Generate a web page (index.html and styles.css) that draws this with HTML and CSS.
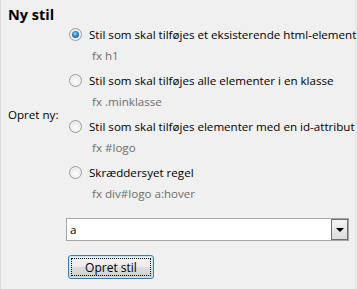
FILE: index.html
```html
<!DOCTYPE html>
<html lang="da">
<head>
<meta charset="utf-8">
<link rel="stylesheet" href="styles.css">
</head>
<body>
<div class="panel">
  <h1 class="title">Ny stil</h1>
  <div class="create">
    <div class="create-label">Opret ny:</div>
    <div class="options">
      <label class="option">
        <span class="radio checked"></span>
        <span class="option-text">Stil som skal tilføjes et eksisterende html-element</span>
      </label>
      <div class="hint">fx h1</div>
      <label class="option">
        <span class="radio"></span>
        <span class="option-text">Stil som skal tilføjes alle elementer i en klasse</span>
      </label>
      <div class="hint">fx .minklasse</div>
      <label class="option">
        <span class="radio"></span>
        <span class="option-text">Stil som skal tilføjes elementer med en id-attribut</span>
      </label>
      <div class="hint">fx #logo</div>
      <label class="option">
        <span class="radio"></span>
        <span class="option-text">Skræddersyet regel</span>
      </label>
      <div class="hint">fx div#logo a:hover</div>
    </div>
  </div>
  <div class="combo">
    <span class="combo-value">a</span>
    <span class="combo-btn"><span class="arrow"></span></span>
  </div>
  <div class="actions">
    <button class="btn"><span class="btn-focus">Opret stil</span></button>
  </div>
</div>
</body>
</html>
```
FILE: styles.css
```css
html, body {
  margin: 0;
  padding: 0;
  background: #f0f0f0;
}
body {
  font-family: "Open Sans", "Noto Sans", sans-serif;
  font-size: 11.6px;
  color: #000;
}
.panel {
  width: 356px;
  height: 289px;
  box-sizing: border-box;
  border-left: 1px solid #dcdcdc;
  border-right: 1px solid #e4e4e4;
  padding: 5px 0 0 7px;
}
.title {
  margin: 0;
  font-size: 14.5px;
  font-weight: bold;
  line-height: 19px;
}
.create {
  display: flex;
  align-items: center;
}
.create-label {
  width: 60px;
  flex: none;
}
.options {
  display: flex;
  flex-direction: column;
  min-width: 0;
}
.option {
  display: flex;
  align-items: center;
  height: 20px;
  margin-top: 4px;
  white-space: nowrap;
}
.option:first-child {
  margin-top: 0;
}
.radio {
  width: 11px;
  height: 11px;
  border-radius: 50%;
  border: 1px solid #9a9a9a;
  background: radial-gradient(circle at 50% 60%, #ffffff 0%, #e6e6e6 70%, #d0d0d0 100%);
  box-shadow: inset 0 0 0 1px #f4f4f4;
  margin-left: 1px;
  margin-right: 7px;
  flex: none;
  position: relative;
}
.radio.checked::after {
  content: "";
  position: absolute;
  left: 2px;
  top: 2px;
  width: 7px;
  height: 7px;
  border-radius: 50%;
  background: radial-gradient(circle at 45% 40%, #9fe0ff 0%, #2b8bd6 40%, #0b4a8a 100%);
}
.hint {
  color: #6e6e6e;
  height: 20px;
  line-height: 20px;
  margin-left: 24px;
  margin-top: 2px;
  white-space: nowrap;
}
.combo {
  display: flex;
  align-items: center;
  margin-left: 58px;
  margin-top: 14px;
  width: 283px;
  height: 23px;
  box-sizing: border-box;
  border: 1px solid #a6a6a6;
  background: #fff;
}
.combo-value {
  flex: 1;
  padding-left: 3px;
}
.combo-btn {
  width: 17px;
  height: 21px;
  box-sizing: border-box;
  border: 1px solid #707070;
  background: linear-gradient(#f4f4f4, #dcdcdc);
  display: flex;
  align-items: center;
  justify-content: center;
}
.arrow {
  width: 0;
  height: 0;
  border-left: 4px solid transparent;
  border-right: 4px solid transparent;
  border-top: 4px solid #000;
}
.actions {
  margin-left: 60px;
  margin-top: 14px;
}
.btn {
  width: 86px;
  height: 24px;
  padding: 2px;
  border: 1px solid #3c7fb1;
  border-radius: 3px;
  background: linear-gradient(#f4f4f4 0%, #ebebeb 50%, #dddddd 51%, #cfcfcf 100%);
  box-shadow: inset 0 0 0 1px #c4e5f6;
  font-family: inherit;
  font-size: 12px;
  color: #000;
}
.btn-focus {
  display: flex;
  align-items: center;
  justify-content: center;
  height: 100%;
  border: 1px dotted #000;
  box-sizing: border-box;
}
```
